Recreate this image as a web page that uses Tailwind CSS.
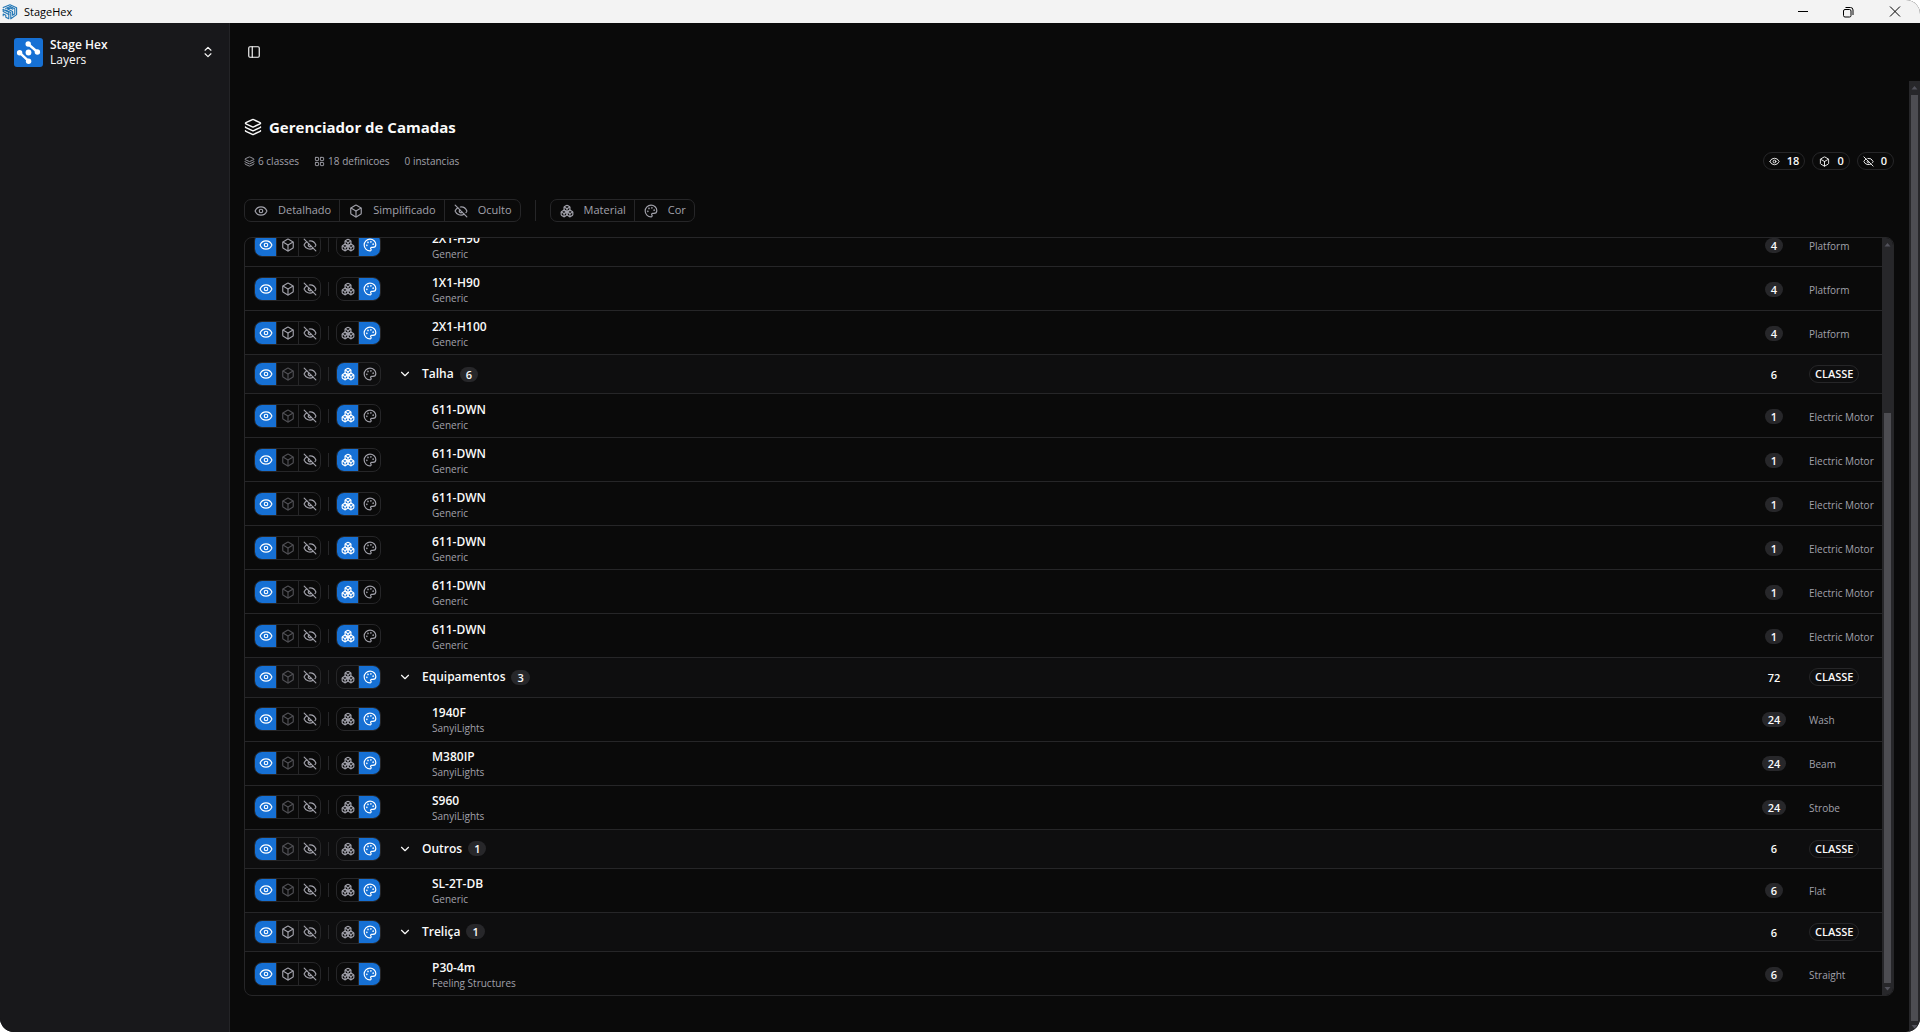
<!DOCTYPE html>
<html lang="pt-BR">
<head>
<meta charset="utf-8">
<title>StageHex</title>
<script src="https://cdn.jsdelivr.net/npm/@tailwindcss/browser@4"></script>
</head>
<body class="h-screen overflow-hidden bg-white font-['Open_Sans','Noto_Sans',sans-serif]">

<svg class="hidden" aria-hidden="true">
  <symbol id="eye" viewBox="0 0 24 24"><path d="M2.062 12.348a1 1 0 0 1 0-.696 10.75 10.75 0 0 1 19.876 0 1 1 0 0 1 0 .696 10.75 10.75 0 0 1-19.876 0"/><circle cx="12" cy="12" r="3"/></symbol>
  <symbol id="eye-off" viewBox="0 0 24 24"><path d="M10.733 5.076a10.744 10.744 0 0 1 11.205 6.575 1 1 0 0 1 0 .696 10.747 10.747 0 0 1-1.444 2.49"/><path d="M14.084 14.158a3 3 0 0 1-4.242-4.242"/><path d="M17.479 17.499a10.75 10.75 0 0 1-15.417-5.151 1 1 0 0 1 0-.696 10.75 10.75 0 0 1 4.446-5.143"/><path d="m2 2 20 20"/></symbol>
  <symbol id="box" viewBox="0 0 24 24"><path d="M21 8a2 2 0 0 0-1-1.73l-7-4a2 2 0 0 0-2 0l-7 4A2 2 0 0 0 3 8v8a2 2 0 0 0 1 1.73l7 4a2 2 0 0 0 2 0l7-4A2 2 0 0 0 21 16Z"/><path d="m3.3 7 8.7 5 8.7-5"/><path d="M12 22V12"/></symbol>
  <symbol id="boxes" viewBox="0 0 24 24"><path d="M2.97 12.92A2 2 0 0 0 2 14.63v3.24a2 2 0 0 0 .97 1.71l3 1.8a2 2 0 0 0 2.06 0L12 19v-5.5l-5-3-4.03 2.42Z"/><path d="m7 16.5-4.74-2.85"/><path d="m7 16.5 5-3"/><path d="M7 16.5v5.17"/><path d="M12 13.5V19l3.97 2.38a2 2 0 0 0 2.06 0l3-1.8a2 2 0 0 0 .97-1.71v-3.24a2 2 0 0 0-.97-1.71L17 10.5l-5 3Z"/><path d="m17 16.5-5-3"/><path d="m17 16.5 4.74-2.85"/><path d="M17 16.5v5.17"/><path d="M7.97 4.42A2 2 0 0 0 7 6.13v4.37l5 3 5-3V6.13a2 2 0 0 0-.97-1.71l-3-1.8a2 2 0 0 0-2.06 0l-3 1.8Z"/><path d="M12 8 7.26 5.15"/><path d="m12 8 4.74-2.85"/><path d="M12 13.5V8"/></symbol>
  <symbol id="palette" viewBox="0 0 24 24"><path d="M12 22a1 1 0 0 1 0-20 10 9 0 0 1 10 9 5 5 0 0 1-5 5h-2.25a1.75 1.75 0 0 0-1.4 2.8l.3.4a1.75 1.75 0 0 1-1.4 2.8z"/><g fill="currentColor"><circle cx="13.5" cy="6.5" r=".5"/><circle cx="17.5" cy="10.5" r=".5"/><circle cx="6.5" cy="12.5" r=".5"/><circle cx="8.5" cy="7.5" r=".5"/></g></symbol>
  <symbol id="layers" viewBox="0 0 24 24"><path d="M12.83 2.18a2 2 0 0 0-1.66 0L2.6 6.08a1 1 0 0 0 0 1.83l8.58 3.91a2 2 0 0 0 1.66 0l8.58-3.9a1 1 0 0 0 0-1.83z"/><path d="M2 12a1 1 0 0 0 .58.91l8.6 3.91a2 2 0 0 0 1.65 0l8.58-3.9A1 1 0 0 0 22 12"/><path d="M2 17a1 1 0 0 0 .58.91l8.6 3.91a2 2 0 0 0 1.65 0l8.58-3.9A1 1 0 0 0 22 17"/></symbol>
  <symbol id="grid" viewBox="0 0 24 24"><rect x="3" y="3" width="7" height="7" rx="1"/><rect x="14" y="3" width="7" height="7" rx="1"/><rect x="14" y="14" width="7" height="7" rx="1"/><rect x="3" y="14" width="7" height="7" rx="1"/></symbol>
  <symbol id="chevron" viewBox="0 0 24 24"><path d="m6 9 6 6 6-6"/></symbol>
  <symbol id="updown" viewBox="0 0 24 24"><path d="m7 15 5 5 5-5"/><path d="m7 9 5-5 5 5"/></symbol>
  <symbol id="panel" viewBox="0 0 24 24"><rect x="3" y="3" width="18" height="18" rx="2"/><path d="M9 3v18"/></symbol>
</svg>

<div class="flex h-full flex-col overflow-hidden rounded-b-[14px] rounded-tr-[14px] bg-[#0a0a0a] text-[#fafafa]">

  <!-- window title bar -->
  <div class="flex h-[23px] shrink-0 items-center bg-[#f3f3f3] pl-[2px] text-black">
    <svg class="size-4" viewBox="0 0 16 16" fill="none" stroke="#2176b5" stroke-width="1.1" stroke-linejoin="round" stroke-linecap="round">
      <path d="M1.200 3.600 8 .8l6.600 3v6.800L8.800 14.800V8.600L3.600 6"/>
      <path d="M3.600 4.400 8.200 2.600l4.600 2.100v5L10.600 11.300V7.400L5.600 4.900l2.800-.8 2.400 1.100"/>
      <path d="M1.200 5.400v2.200l5.600 2.800v4.400l-3-1.500v-2l-2.600-1.300v1.800"/>
      <path d="M1.200 5.400 6.800 8.200v2.200"/>
    </svg>
    <span class="ml-[6px] text-[11px] leading-4">StageHex</span>
    <div class="ml-auto flex h-full">
      <button type="button" aria-label="Minimizar" class="flex w-[45px] items-center justify-center"><svg class="size-3" viewBox="0 0 12 12" fill="none" stroke="#000"><path d="M1 5.5h10"/></svg></button>
      <button type="button" aria-label="Restaurar" class="flex w-[45px] items-center justify-center"><svg class="size-3" viewBox="0 0 12 12" fill="none" stroke="#000"><rect x="1.5" y="3.5" width="7.500" height="7.500" rx="1.500"/><path d="M3.500 1.500h5a2.500 2.500 0 0 1 2.500 2.500v5"/></svg></button>
      <button type="button" aria-label="Fechar" class="flex w-[50px] items-center justify-center"><svg class="size-3" viewBox="0 0 12 12" fill="none" stroke="#000"><path d="m1 0.500 10 10M11 .5l-10 10"/></svg></button>
    </div>
  </div>

  <div class="flex min-h-0 flex-1">
    <!-- sidebar -->
    <aside class="w-[230px] shrink-0 border-r border-[#242427] bg-[#18181b]">
      <button type="button" class="flex h-[58px] w-full items-center pl-[14px] pr-[14px] text-left">
        <svg class="size-[29px]" viewBox="0 0 29 29" fill="#fff">
          <rect width="29" height="29" rx="3" fill="#1670d4"/>
          <circle cx="14.500" cy="14.500" r="2.900"/>
          <circle cx="14.200" cy="6" r="2.700"/><circle cx="23.400" cy="14" r="2.700"/>
          <circle cx="5.600" cy="14.700" r="2.700"/><circle cx="14.600" cy="23.200" r="2.700"/>
          <path d="M14.200 6l9.200 8M5.600 14.700l9 8.500" stroke="#fff" stroke-width="2.400"/>
        </svg>
        <span class="ml-[7px] flex-1 text-xs leading-[15px]"><span class="block font-semibold">Stage Hex</span><span class="block">Layers</span></span>
        <svg class="size-[14px] fill-none stroke-current stroke-2" stroke-linecap="round" stroke-linejoin="round"><use href="#updown"/></svg>
      </button>
    </aside>

    <div class="flex min-w-0 flex-1 flex-col">
      <header class="flex h-[58px] shrink-0 items-center pl-[17px]">
        <button type="button" aria-label="Alternar barra lateral"><svg class="size-[14px] fill-none stroke-current stroke-2" stroke-linecap="round" stroke-linejoin="round"><use href="#panel"/></svg></button>
      </header>

      <div class="flex min-h-0 flex-1">
        <main class="flex min-w-0 flex-1 flex-col pb-9 pl-[14px] pr-[15px] pt-[34px]">
          <h1 class="flex items-center gap-[7px] text-[15px] font-bold leading-6">
            <svg class="size-[18px] fill-none stroke-current stroke-2" stroke-linecap="round" stroke-linejoin="round"><use href="#layers"/></svg>
            Gerenciador de Camadas
          </h1>

          <div class="mt-[13px] flex h-[18px] items-center">
            <div class="flex flex-1 items-center gap-[15px] text-[10px] text-[#a1a1aa]">
              <span class="flex items-center gap-[3px]"><svg class="size-[11px] fill-none stroke-current stroke-2" stroke-linecap="round" stroke-linejoin="round"><use href="#layers"/></svg>6 classes</span>
              <span class="flex items-center gap-[3px]"><svg class="size-[11px] fill-none stroke-current stroke-2" stroke-linecap="round" stroke-linejoin="round"><use href="#grid"/></svg>18 definicoes</span>
              <span>0 instancias</span>
            </div>
            <div class="flex gap-[7px] text-[11px] font-semibold leading-4">
              <span class="flex items-center gap-[7px] rounded-full border border-[#262628] px-[5px]"><svg class="size-[11px] fill-none stroke-current stroke-2" stroke-linecap="round" stroke-linejoin="round"><use href="#eye"/></svg>18</span>
              <span class="flex items-center gap-[7px] rounded-full border border-[#262628] pl-[6px] pr-[5px]"><svg class="size-[11px] fill-none stroke-current stroke-2" stroke-linecap="round" stroke-linejoin="round"><use href="#box"/></svg>0</span>
              <span class="flex items-center gap-[7px] rounded-full border border-[#262628] pl-[5px] pr-[6px]"><svg class="size-[11px] fill-none stroke-current stroke-2" stroke-linecap="round" stroke-linejoin="round"><use href="#eye-off"/></svg>0</span>
            </div>
          </div>

          <div class="mt-[29px] flex h-[23px] items-center text-[11px] font-medium text-[#a1a1aa]">
            <div class="flex h-full divide-x divide-[#262628] rounded-[7px] border border-[#262628]">
              <button type="button" class="flex items-center gap-[10px] pl-[9px] pr-2"><svg class="size-[14px] fill-none stroke-current stroke-2" stroke-linecap="round" stroke-linejoin="round"><use href="#eye"/></svg>Detalhado</button>
              <button type="button" class="flex items-center gap-[10px] pl-[9px] pr-2"><svg class="size-[14px] fill-none stroke-current stroke-2" stroke-linecap="round" stroke-linejoin="round"><use href="#box"/></svg>Simplificado</button>
              <button type="button" class="flex items-center gap-[10px] pl-[9px] pr-2"><svg class="size-[14px] fill-none stroke-current stroke-2" stroke-linecap="round" stroke-linejoin="round"><use href="#eye-off"/></svg>Oculto</button>
            </div>
            <div class="mx-[14px] h-[21px] w-px bg-[#262628]"></div>
            <div class="flex h-full divide-x divide-[#262628] rounded-[7px] border border-[#262628]">
              <button type="button" class="flex items-center gap-[10px] pl-[9px] pr-2"><svg class="size-[14px] fill-none stroke-current stroke-2" stroke-linecap="round" stroke-linejoin="round"><use href="#boxes"/></svg>Material</button>
              <button type="button" class="flex items-center gap-[10px] pl-[9px] pr-2"><svg class="size-[14px] fill-none stroke-current stroke-2" stroke-linecap="round" stroke-linejoin="round"><use href="#palette"/></svg>Cor</button>
            </div>
          </div>

          <!-- layer table, scrolled to its end -->
          <div class="mt-[15px] flex min-h-0 flex-1 overflow-hidden rounded-lg border border-[#262628]">
            <div class="flex min-w-0 flex-1 flex-col justify-end overflow-hidden">
              <table class="-mb-px h-[773px] w-full shrink-0 table-fixed border-separate border-spacing-0">
                <colgroup><col class="w-[150px]"><col><col class="w-14"><col class="w-20"></colgroup>
                <tbody id="rows"></tbody>
              </table>
            </div>
            <div class="flex w-[11px] shrink-0 flex-col items-center bg-[#27272a]">
              <svg class="h-[14px] w-[11px] shrink-0" viewBox="0 0 11 14" fill="#52525b"><path d="M2.500 8.500 5.500 5l3 3.500z"/></svg>
              <div class="flex w-[7px] flex-1 flex-col justify-end"><div class="h-[78%] bg-[#4d4d52]"></div></div>
              <svg class="h-[12px] w-[11px] shrink-0" viewBox="0 0 11 12" fill="#52525b"><path d="M2.500 4 5.500 7.500l3-3.500z"/></svg>
            </div>
          </div>
        </main>

        <div class="flex w-[11px] shrink-0 flex-col items-center bg-[#27272a]">
          <svg class="h-[14px] w-[11px] shrink-0" viewBox="0 0 11 14" fill="#52525b"><path d="M2.500 8.500 5.500 5l3 3.500z"/></svg>
          <div class="w-[7px] flex-1 bg-[#4d4d52]"></div>
          <svg class="h-[11px] w-[11px] shrink-0" viewBox="0 0 11 11" fill="#52525b"><path d="M2.500 4 5.500 7.500l3-3.500z"/></svg>
        </div>
      </div>
    </div>
  </div>
</div>

<script>
// [name, maker or null for a class row, count, category or number of items, simplified available, appearance]
const data = [
  ['2X1-H90', 'Generic', 4, 'Platform', true, 'color'],
  ['1X1-H90', 'Generic', 4, 'Platform', true, 'color'],
  ['2X1-H100', 'Generic', 4, 'Platform', true, 'color'],
  ['Talha', null, 6, 6, false, 'material'],
  ['611-DWN', 'Generic', 1, 'Electric Motor', false, 'material'],
  ['611-DWN', 'Generic', 1, 'Electric Motor', false, 'material'],
  ['611-DWN', 'Generic', 1, 'Electric Motor', false, 'material'],
  ['611-DWN', 'Generic', 1, 'Electric Motor', false, 'material'],
  ['611-DWN', 'Generic', 1, 'Electric Motor', false, 'material'],
  ['611-DWN', 'Generic', 1, 'Electric Motor', false, 'material'],
  ['Equipamentos', null, 72, 3, false, 'color'],
  ['1940F', 'SanyiLights', 24, 'Wash', false, 'color'],
  ['M380IP', 'SanyiLights', 24, 'Beam', false, 'color'],
  ['S960', 'SanyiLights', 24, 'Strobe', false, 'color'],
  ['Outros', null, 6, 1, false, 'color'],
  ['SL-2T-DB', 'Generic', 6, 'Flat', false, 'color'],
  ['Treliça', null, 6, 1, true, 'color'],
  ['P30-4m', 'Feeling Structures', 6, 'Straight', true, 'color'],
];
const icon = id => `<svg class="size-[14px] fill-none stroke-current stroke-2" stroke-linecap="round" stroke-linejoin="round"><use href="#${id}"/></svg>`;
const toggle = (id, label, on, off) => `<button type="button" aria-label="${label}" aria-pressed="${on}" ${off ? 'disabled' : ''} class="flex w-[21px] items-center justify-center ${on ? 'bg-[#1670d4] text-white' : off ? 'text-[#505055]' : 'text-[#a1a1aa]'}">${icon(id)}</button>`;
const rule = '<span class="w-px bg-[#262628]"></span>';
const group = items => `<div class="flex h-6 overflow-hidden rounded-lg border border-[#262628]">${items.join(rule)}</div>`;
const controls = (simple, look) => `<div class="flex items-center">${group([
  toggle('eye', 'Detalhado', true), toggle('box', 'Simplificado', false, !simple), toggle('eye-off', 'Oculto', false)])}
  <span class="mx-[7px] h-[14px] w-px bg-[#262628]"></span>${group([
  toggle('boxes', 'Material', look === 'material'), toggle('palette', 'Cor', look === 'color')])}</div>`;

document.getElementById('rows').innerHTML = data.map(([name, maker, count, extra, simple, look], i) => {
  const line = i < data.length - 1 ? 'border-b border-[#262628]' : '';
  return maker ? `<tr class="h-11">
    <td class="${line} pl-[9px]">${controls(simple, look)}</td>
    <td class="${line} pl-[37px] pt-[3px]"><div class="text-xs font-semibold leading-4">${name}</div><div class="text-[10px] leading-[15px] text-[#a1a1aa]">${maker}</div></td>
    <td class="${line} pt-px"><div class="mx-auto w-fit rounded-full bg-[#27272a] px-[6px] text-[11px] font-semibold leading-[15px]">${count}</div></td>
    <td class="${line} whitespace-nowrap pl-[7px] pt-[3px] text-[10px] text-[#a1a1aa]">${extra}</td></tr>`
  : `<tr class="h-[39px] bg-[#0e0e0f]">
    <td class="${line} pl-[9px]">${controls(simple, look)}</td>
    <td class="${line} pl-[3px]"><button type="button" aria-expanded="true" class="flex items-center text-xs font-semibold leading-4">${icon('chevron')}<span class="ml-[10px]">${name}</span><span class="ml-[6px] rounded-full bg-[#27272a] px-[6px] text-[11px] leading-[15px]">${extra}</span></button></td>
    <td class="${line} pt-[2px] text-center text-[11px] font-semibold">${count}</td>
    <td class="${line} pl-[7px]"><div class="w-fit rounded-full border border-[#262628] px-[5px] text-[11px] font-semibold leading-4">CLASSE</div></td></tr>`;
}).join('');
</script>
</body>
</html>
